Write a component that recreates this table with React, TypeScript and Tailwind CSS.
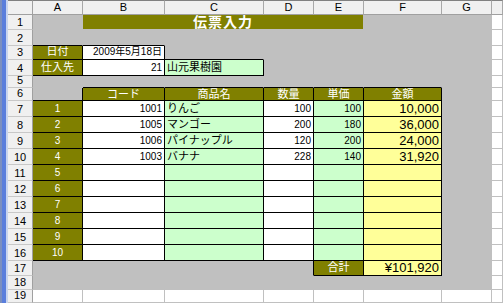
import React from "react";

// Sheet layout: column letters A..H (H is the partial column at the right edge)
const LETTERS = ["A", "B", "C", "D", "E", "F", "G", "H"];
const ROW_COUNT = 19;

type Tone = "olive" | "white" | "green" | "yellow";
type Kind = "jp" | "num" | "big" | "head";
type CellDef = { v?: string; tone: Tone; align: "l" | "c" | "r"; kind: Kind };

// every cell listed here is filled and carries a thin black border
const cells: Record<string, CellDef> = {};
const put = (addr: string, def: CellDef) => {
  cells[addr] = def;
};

put("A3", { v: "日付", tone: "olive", align: "c", kind: "jp" });
put("B3", { v: "2009年5月18日", tone: "white", align: "r", kind: "num" });
put("A4", { v: "仕入先", tone: "olive", align: "c", kind: "jp" });
put("B4", { v: "21", tone: "white", align: "r", kind: "num" });
put("C4", { v: "山元果樹園", tone: "green", align: "l", kind: "jp" });

["コード", "商品名", "数量", "単価", "金額"].forEach((h, i) =>
  put(`${LETTERS[i + 1]}6`, { v: h, tone: "olive", align: "c", kind: "head" })
);

const lines = [
  { code: "1001", name: "りんご", qty: "100", price: "100", amount: "10,000" },
  { code: "1005", name: "マンゴー", qty: "200", price: "180", amount: "36,000" },
  { code: "1006", name: "パイナップル", qty: "120", price: "200", amount: "24,000" },
  { code: "1003", name: "バナナ", qty: "228", price: "140", amount: "31,920" },
];

for (let i = 0; i < 10; i++) {
  const r = 7 + i;
  const line = lines[i];
  put(`A${r}`, { v: String(i + 1), tone: "olive", align: "c", kind: "num" });
  put(`B${r}`, { v: line?.code, tone: "white", align: "r", kind: "num" });
  put(`C${r}`, { v: line?.name, tone: "green", align: "l", kind: "jp" });
  put(`D${r}`, { v: line?.qty, tone: "white", align: "r", kind: "num" });
  put(`E${r}`, { v: line?.price, tone: "green", align: "r", kind: "num" });
  put(`F${r}`, { v: line?.amount, tone: "yellow", align: "r", kind: "big" });
}

put("E17", { v: "合計", tone: "olive", align: "c", kind: "jp" });
put("F17", { v: "¥101,920", tone: "yellow", align: "r", kind: "big" });

const bordered = (r: number, c: number) => cells[`${LETTERS[c]}${r}`] !== undefined;

const toneBg: Record<Tone | "gray" | "blank", string> = {
  olive: "bg-[#808000] text-white",
  white: "bg-white text-black",
  green: "bg-[#ccffcc] text-black",
  yellow: "bg-[#ffff99] text-black",
  gray: "bg-[#c0c0c0] text-black",
  blank: "bg-white text-black",
};

const kindText: Record<Kind, string> = {
  jp: "items-end pb-[2px] text-[11px]",
  num: "items-end pb-[2px] text-[10px]",
  big: "items-end pb-[1px] text-[13px]",
  head: "items-center text-[11px]",
};

const alignCls = {
  l: "justify-start pl-[2px]",
  c: "justify-center",
  r: "justify-end pr-[2px]",
};

function Cell({ r, c }: { r: number; c: number }) {
  const def = cells[`${LETTERS[c]}${r}`];
  const shaded = c <= 6 && r <= 18;
  const bg = def ? toneBg[def.tone] : shaded ? toneBg.gray : toneBg.blank;
  const right = bordered(r, c) || bordered(r, c + 1) ? "border-r-black" : "border-r-[#c0c0c0]";
  const bottom = bordered(r, c) || bordered(r + 1, c) ? "border-b-black" : "border-b-[#c0c0c0]";
  return (
    <div
      className={`flex overflow-hidden whitespace-nowrap border-r border-b leading-none ${right} ${bottom} ${bg} ${
        def ? `${alignCls[def.align]} ${kindText[def.kind]}` : ""
      }`}
    >
      {def?.v}
    </div>
  );
}

export default function App() {
  const body: React.ReactNode[] = [];

  for (let r = 1; r <= ROW_COUNT; r++) {
    body.push(
      <div
        key={`h${r}`}
        className="flex items-end justify-center border-r border-b border-r-[#a0a0a0] border-b-[#c8c8c8] bg-[#f0f0f0] pb-[1px] text-[11px] leading-none text-black"
      >
        {r}
      </div>
    );
    for (let c = 0; c < LETTERS.length; c++) {
      if (r === 1 && c >= 1 && c <= 4) {
        // merged title B1:E1
        if (c === 1) {
          body.push(
            <div
              key="title"
              className="col-span-4 flex items-center justify-center border-r border-b border-r-[#c0c0c0] border-b-[#c0c0c0] bg-[#808000] text-[14px] font-bold leading-none tracking-[1px] text-white"
            >
              伝票入力
            </div>
          );
        }
        continue;
      }
      body.push(<Cell key={`${r}-${c}`} r={r} c={c} />);
    }
  }

  return (
    <div className="flex h-[303px] w-[503px] overflow-hidden bg-white font-['Liberation_Sans','Noto_Sans_CJK_JP',sans-serif]">
      {/* window frame on the left edge */}
      <div className="flex h-full">
        <div className="w-[2px] bg-[#7b8fbf]" />
        <div className="w-[4px] bg-[#5a7edc]" />
        <div className="w-[2px] bg-[#c8d4ee]" />
      </div>

      <div className="grid flex-1 grid-cols-[25px_50px_82px_99px_50px_50px_78px_50px_1fr] grid-rows-[15px_15px_16px_14px_16px_12px_13px_16px_16px_16px_16px_16px_16px_16px_16px_16px_16px_15px_14px_1fr]">
        {/* column headers */}
        <div className="border-t border-r border-b border-t-[#808080] border-r-[#a0a0a0] border-b-[#a0a0a0] bg-[#f0f0f0]" />
        {LETTERS.map((l, i) => (
          <div
            key={l}
            className="flex items-center justify-center border-t border-r border-b border-t-[#808080] border-r-[#a8a8a8] border-b-[#a0a0a0] bg-[#f0f0f0] text-[11px] leading-none text-black"
          >
            {i < 7 ? l : ""}
          </div>
        ))}
        {body}
      </div>
    </div>
  );
}
